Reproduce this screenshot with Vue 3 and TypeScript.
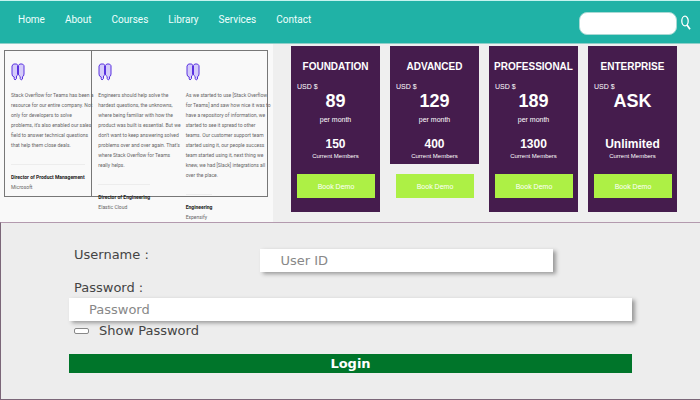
<script setup lang="ts">
import { ref } from 'vue'

interface Quote {
  text: string
  role: string
  company: string
}

interface Plan {
  name: string
  price: string
  period: string
  members: string
  short?: boolean
}

const links: string[] = ['Home', 'About', 'Courses', 'Library', 'Services', 'Contact']

const quotes: Quote[] = [
  {
    text: 'Stack Overflow for Teams has been a\nresource for our entire company. Not\nonly for developers to solve\nproblems, it’s also enabled our sales\nfield to answer technical questions\nthat help them close deals.',
    role: 'Director of Product Management',
    company: 'Microsoft',
  },
  {
    text: 'Engineers should help solve the\nhardest questions, the unknowns,\nwhere being familiar with how the\nproduct was built is essential. But we\ndon’t want to keep answering solved\nproblems over and over again. That’s\nwhere Stack Overflow for Teams\nreally helps.',
    role: 'Director of Engineering',
    company: 'Elastic Cloud',
  },
  {
    text: 'As we started to use [Stack Overflow\nfor Teams] and saw how nice it was to\nhave a repository of information, we\nstarted to see it spread to other\nteams. Our customer support team\nstarted using it, our people success\nteam started using it, next thing we\nknew, we had [Slack] integrations all\nover the place.',
    role: 'Engineering',
    company: 'Expensify',
  },
]

const plans: Plan[] = [
  { name: 'FOUNDATION', price: '89', period: 'per month', members: '150' },
  { name: 'ADVANCED', price: '129', period: 'per month', members: '400', short: true },
  { name: 'PROFESSIONAL', price: '189', period: 'per month', members: '1300' },
  { name: 'ENTERPRISE', price: 'ASK', period: '', members: 'Unlimited' },
]

const search = ref('')
const username = ref('')
const password = ref('')
const showPassword = ref(false)
</script>

<template>
  <div class="page">
    <header class="topbar">
      <nav class="nav">
        <a v-for="link in links" :key="link" href="#" class="nav-link">{{ link }}</a>
      </nav>
      <form class="search" role="search" @submit.prevent>
        <input v-model="search" class="search-box" type="search" aria-label="Search" />
        <button class="search-button" type="submit" aria-label="Submit search">
          <svg viewBox="0 0 10 16" width="10" height="16" fill="none" stroke="#fff">
            <ellipse cx="4" cy="6" rx="3.2" ry="4.8" stroke-width="1.3" />
            <path d="M6 10 9 14.3" stroke-width="1.7" />
          </svg>
        </button>
      </form>
    </header>

    <main>
      <div class="middle">
        <section class="quotes">
          <div class="frame">
            <article v-for="quote in quotes" :key="quote.role" class="quote">
              <svg class="mark" viewBox="0 0 14 18" width="14" height="18" fill="#d5ccfa" stroke="#5a32e0">
                <path d="M2.5 1h2.8q1.2 0 1.2 1.5v9q0 1.2-1 1.5v2.6L4 17l-.8-1.2V14L1.5 13 1 11V3z" />
                <path d="M8.7 1h2.8L13 2.7V11l-.5 2-1 .6V16l-1.2 1-1.1-1.4V13.6L7.5 12V2.5z" />
              </svg>
              <p class="quote-text">{{ quote.text }}</p>
              <footer class="author">
                <strong>{{ quote.role }}</strong>
                <span>{{ quote.company }}</span>
              </footer>
            </article>
          </div>
        </section>

        <section class="plans">
          <article v-for="plan in plans" :key="plan.name" class="plan" :class="{ short: plan.short }">
            <div class="plan-info">
              <h2 class="plan-name">{{ plan.name }}</h2>
              <span class="currency">USD $</span>
              <strong class="price">{{ plan.price }}</strong>
              <span class="period">{{ plan.period }}</span>
              <strong class="members">{{ plan.members }}</strong>
              <span class="caption">Current Members</span>
            </div>
            <button class="book" type="button">Book Demo</button>
          </article>
        </section>
      </div>

      <form class="login" @submit.prevent>
        <div class="user-row">
          <label for="username" class="label">Username :</label>
          <input id="username" v-model="username" class="field" type="text" placeholder="User ID" />
        </div>
        <label for="password" class="label password-label">Password :</label>
        <input
          id="password"
          v-model="password"
          class="field"
          :type="showPassword ? 'text' : 'password'"
          placeholder="Password"
        />
        <div class="show-row">
          <input id="show" v-model="showPassword" class="tick" type="checkbox" />
          <label for="show">Show Password</label>
        </div>
        <button class="submit" type="submit">Login</button>
      </form>
    </main>
  </div>
</template>

<style>
body {
  margin: 0;
  background: #eeeeee;
}
</style>

<style scoped>
.page,
.page * {
  box-sizing: border-box;
}

.page {
  font-family: "Liberation Sans", sans-serif;
}

button,
input {
  font-family: inherit;
  margin: 0;
  border: 0;
}

.topbar {
  display: flex;
  justify-content: space-between;
  align-items: flex-start;
  height: 44px;
  padding: 11px 9px 0 18px;
  background: #20b2a6;
  border-top: 1px solid #c4f3ef;
  border-bottom: 1px solid #8fcfc9;
}

.nav {
  display: flex;
  gap: 20px;
}

.nav-link {
  color: #effffd;
  font-family: Roboto, sans-serif;
  font-size: 10px;
  line-height: 16px;
  text-decoration: none;
}

.search {
  display: flex;
  align-items: flex-start;
  gap: 4px;
}

.search-box {
  width: 98px;
  height: 23px;
  padding: 0 8px;
  border: 1px solid #a9d9d4;
  border-radius: 8px;
  background: #fff;
  font-size: 11px;
  outline: none;
  appearance: none;
}

.search-button {
  display: flex;
  padding: 3px 0 0;
  background: none;
}

.middle {
  display: grid;
  grid-template-columns: minmax(0, 39fr) minmax(0, 61fr);
  height: 178px;
}

.quotes {
  padding: 6px 5px 0 4px;
  background: #f9f9f9;
}

.frame {
  display: grid;
  grid-template-columns: repeat(3, minmax(0, 1fr));
  grid-template-rows: 100%;
  height: 147px;
  border: 1px solid #777;
}

.quote {
  padding: 12px 0 0 6px;
  color: #666;
  font-family: Roboto, sans-serif;
  font-size: 5px;
  line-height: 10px;
  white-space: nowrap;
}

.quote:first-child {
  border-right: 1px solid #777;
}

.mark {
  display: block;
}

.quote-text {
  margin: 9px 0 14px;
  white-space: pre;
}

.author {
  display: inline-flex;
  flex-direction: column;
  padding-top: 7px;
  border-top: 1px solid #ededed;
}

.author strong {
  color: #222;
}

.plans {
  display: grid;
  grid-template-columns: repeat(4, minmax(0, 1fr));
  gap: 10px;
  padding: 2px 23px 10px 18px;
  background: #efefef;
}

.plan {
  display: flex;
  flex-direction: column;
  background: #451c4d;
  color: #fff;
  text-align: center;
}

.plan.short {
  background: none;
}

.plan-info {
  display: flex;
  flex-direction: column;
  height: 118px;
  padding-top: 13px;
  background: #451c4d;
}

.plan-name {
  margin: 0;
  font-size: 10px;
  line-height: 16px;
}

.currency {
  padding: 7px 0 0 6px;
  font-size: 7px;
  line-height: 10px;
  text-align: left;
}

.price {
  font-size: 18px;
  line-height: 18px;
}

.period {
  height: 20px;
  font-size: 7px;
  line-height: 20px;
}

.members {
  padding-top: 7px;
  font-size: 12px;
  line-height: 14px;
}

.caption {
  font-size: 6px;
  line-height: 10px;
}

.book {
  height: 24px;
  margin: 10px 5px 0 6px;
  padding: 0;
  background: #adf045;
  color: #fff;
  font-size: 7px;
}

.login {
  display: flex;
  flex-direction: column;
  height: 178px;
  padding: 26px 68px 0;
  border: 1px solid #7b6678;
  border-top-color: #b39aae;
  border-right: 0;
  background: #ededed;
  color: #444;
  font-family: "DejaVu Sans", sans-serif;
  font-size: 13px;
  line-height: 12px;
}

.user-row {
  display: grid;
  grid-template-columns: 34fr 52fr 14fr;
}

.label {
  padding-left: 5px;
}

.password-label {
  margin: 10px 0 4px;
}

.field {
  width: 100%;
  height: 23px;
  padding: 0 20px;
  border-radius: 0;
  background: #fff;
  box-shadow: 3px 2px 4px #999;
  color: #444;
  font-size: 13px;
  outline: none;
}

.field::placeholder {
  color: #888;
  opacity: 1;
}

.show-row {
  display: flex;
  align-items: center;
  gap: 10px;
  margin-top: 4px;
  padding-left: 5px;
}

.tick {
  width: 15px;
  height: 6px;
  border: 1px solid #888;
  border-radius: 2px;
  background: #fff;
  appearance: none;
}

.tick:checked {
  background: #00752a;
}

.submit {
  height: 19px;
  margin-top: 17px;
  padding: 0;
  background: #00752a;
  color: #fff;
  font-size: 13px;
  font-weight: bold;
}
</style>
